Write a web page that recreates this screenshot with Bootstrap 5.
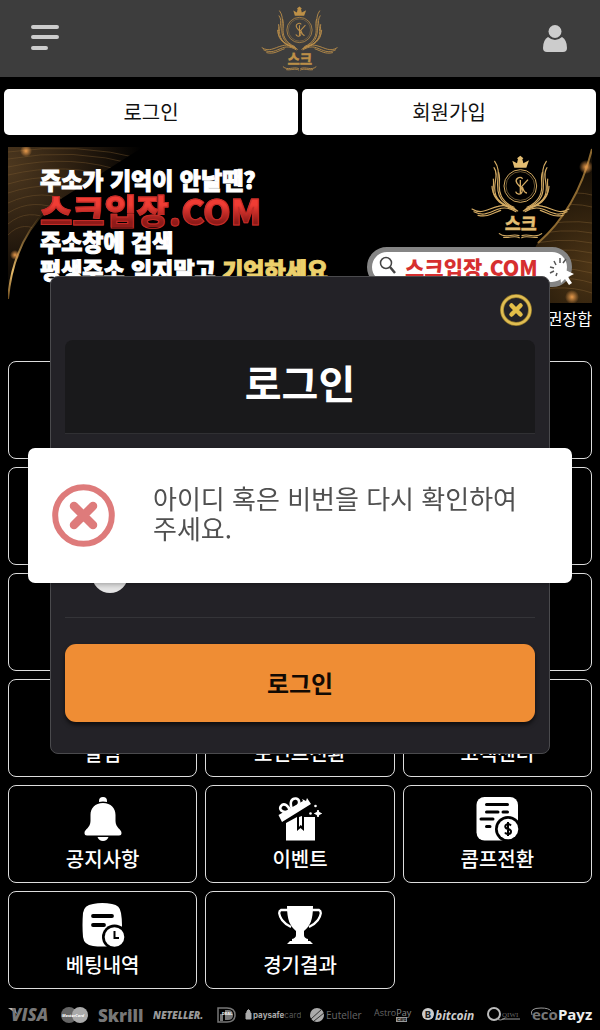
<!DOCTYPE html>
<html lang="ko" data-bs-theme="dark">
<head>
<meta charset="utf-8">
<meta name="viewport" content="width=device-width, initial-scale=1">
<title>로그인</title>
<link href="https://cdn.jsdelivr.net/npm/bootstrap@5.3.0/dist/css/bootstrap.min.css" rel="stylesheet">
<style>
body{background:#000;color:#fff;font-family:"Noto Sans CJK KR",sans-serif}
.topbar{background:#3d3d3d;height:77px;padding:0 31px}
.topbar button{width:28px;height:28px;line-height:0}
.side{flex:1 1 0}
.auth{padding:12px 4px;gap:4px}
.auth a{background:#fff;color:#111;border-radius:5px;font-size:20px;line-height:46px}
.promo{margin:0 8px;height:156px;overflow:hidden}
.promo-bg{position:absolute;inset:0;width:100%;height:100%}
.slogan{position:relative;padding:18px 0 0 32px;font-weight:900;font-size:23px;line-height:28px;-webkit-text-stroke:1px currentColor;white-space:nowrap}
.slogan .big{font-size:35px;line-height:34px;color:#d5302b;-webkit-text-stroke:1px #c42c27;background:linear-gradient(#f03c34 35%,#8f1a18 85%);-webkit-background-clip:text;background-clip:text;-webkit-text-fill-color:transparent}
.slogan .gold{color:#ecd06c}
.promo-side{position:absolute;right:20px;top:8px}
.pill{background:#fff;border:5px solid #858585;border-radius:20px;width:205px;height:40px;color:#d62f2f;font-weight:900;font-size:21px;line-height:30px;padding-left:7px;gap:8px}
.pointer{position:absolute;right:-8px;bottom:-4px}
.ticker{margin:0 8px;font-size:16px;line-height:30px;height:58px;text-align:right;font-weight:400}
.tiles{display:grid;grid-template-columns:repeat(3,1fr);gap:8px;padding:0 8px}
.tile{height:98px;border:1px solid #ddd;border-radius:8px;padding-top:11px;color:#fff;font-weight:500;font-size:20px;line-height:30px;gap:3px}
.tile svg{width:44px;height:44px;flex:none}
.partners{padding:15px 7px 0 8px}
.partners svg{height:22px;flex:none}
.layer{position:fixed;inset:0}
.login{width:100%;max-width:500px;margin:0 28px;height:478px;background:#232227;border:1px solid #4a4a4d;border-radius:8px;padding:16px 14px 0}
.login .close-x{width:34px;height:34px;line-height:0;margin-right:2px}
.login h1{background:#19191b;border-bottom:1px solid #303033;border-radius:8px 8px 0 0;height:94px;margin:13px 0 0;font-size:40px;line-height:84px;font-weight:700}
.login .fields{height:184px;padding:16px 27px 0;border-bottom:1px solid #343438;gap:8px}
.login .fields input[type=text],.login .fields input[type=password]{height:44px;background:#19191b;border-color:#303033}
.login .fields input[type=checkbox]{width:36px;height:36px;margin:3px 0 0;border-radius:50%;background:#e4e4e4;border:0}
.login .go{margin-top:26px;height:78px;background:#ef8d34;color:#120a04;border:0;border-radius:11px;font-size:24px;line-height:32px;font-weight:700;box-shadow:0 3px 4px #0009}
.notice{width:100%;max-width:544px;margin:0 28px;min-height:135px;background:#fff;border-radius:7px;padding:0 24px;gap:38px;color:#505050;font-size:26px;line-height:30px;box-shadow:0 2px 5px #0004}
.notice svg{flex:none}
.notice div{padding-bottom:4px}
</style>
</head>
<body>
<svg class="d-none">
<defs>
<linearGradient id="gold" x1="0" y1="0" x2="1" y2="1"><stop offset="0" stop-color="#f0d48a"/><stop offset=".5" stop-color="#c09045"/><stop offset="1" stop-color="#ecc878"/></linearGradient>
</defs>
<symbol id="wing" viewBox="0 0 306 252" overflow="visible">
<g fill="none" stroke-width="3.5" stroke-linecap="round">
<path d="M74 19C98 52 72 82 88 122C96 142 114 151 134 161"/>
<path d="M72 38C90 62 64 90 78 122C88 145 112 154 136 163"/>
<path d="M86 52C94 76 80 96 94 124C102 140 116 150 132 157"/>
<path d="M70 72C74 100 58 112 88 141C100 151 122 160 138 165"/>
<path d="M66 94C66 120 90 146 118 157"/>
<path d="M6 162C34 180 52 162 84 154C108 147 126 156 143 168"/>
<path d="M12 170C42 186 58 172 86 162C106 155 122 160 138 170"/>
<path d="M24 181C54 188 68 174 92 166"/>
<path d="M88 236C106 252 126 234 147 242"/>
<path d="M101 247C120 250 132 240 148 248"/>
</g>
</symbol>
<symbol id="emblem" viewBox="0 0 306 252">
<use href="#wing" width="306" height="252"/>
<g transform="matrix(-1 0 0 1 303 0)"><use href="#wing" width="306" height="252"/></g>
<path d="M133 38L127 17L141 25L144 12L141 10L151 2L160 10L157 13L160 25L177 16L169 38Z" fill="currentColor" stroke="none"/>
<circle cx="151" cy="93" r="49" fill="none" stroke-width="3"/>
<circle cx="151" cy="93" r="43" fill="none" stroke-width="1.5"/>
<path d="M158 71C149 62 134 72 140 83C146 94 160 99 156 111C152 122 139 117 137 110M151 75V117M152 98L174 74M157 96C160 106 164 114 171 114" fill="none" stroke-width="4"/>
<text x="152" y="225" text-anchor="middle" font-size="52" font-weight="900" fill="currentColor" stroke-width="1">스크</text>
</symbol>
</svg>

<header class="topbar d-flex align-items-center">
<div class="side"><button class="btn p-0 border-0" aria-label="메뉴"><svg width="28" height="28" stroke="#ccc" stroke-width="4" stroke-linecap="round"><path d="M2 2H26M2 12H26M2 23H15"/></svg></button></div>
<a href="#" aria-label="스크"><svg width="80" height="65" color="#bd9047" stroke="#b98d49"><use href="#emblem" width="80" height="65"/></svg></a>
<div class="side text-end"><button class="btn p-0 border-0" aria-label="내 정보"><svg width="28" height="28" viewBox="0 0 28 28" fill="#ccc"><circle cx="14" cy="6.500" r="6.500"/><path d="M7 12Q14 18 21 12Q26 15 26 23Q26 27 22 27H6Q2 27 2 23Q2 15 7 12Z"/></svg></button></div>
</header>

<nav class="auth d-flex text-center">
<a class="flex-fill w-50 text-decoration-none" href="#">로그인</a>
<a class="flex-fill w-50 text-decoration-none" href="#">회원가입</a>
</nav>

<section class="promo position-relative">
<svg class="promo-bg" viewBox="0 0 584 156" preserveAspectRatio="none">
<defs>
<radialGradient id="gl" gradientUnits="userSpaceOnUse" cx="0" cy="20" r="135"><stop offset="0" stop-color="#4d381f"/><stop offset=".5" stop-color="#2b1e10"/><stop offset="1" stop-color="#000"/></radialGradient>
<radialGradient id="gr" gradientUnits="userSpaceOnUse" cx="584" cy="120" r="120"><stop offset="0" stop-color="#4d3516"/><stop offset="1" stop-color="#0c0803"/></radialGradient>
<radialGradient id="spot"><stop offset="0" stop-color="#e79a4c"/><stop offset="1" stop-color="#e79a4c" stop-opacity="0"/></radialGradient>
<linearGradient id="edge" x1="0" y1="0" x2="0" y2="1"><stop offset="0" stop-color="#7d5a25" stop-opacity=".2"/><stop offset=".7" stop-color="#e8bc6a"/><stop offset="1" stop-color="#6b4a1c"/></linearGradient>
<clipPath id="cl"><path d="M0 0H135Q80 35 40 60Q10 90 0 150Z"/></clipPath>
<clipPath id="cr"><path d="M584 0V156H500Q515 125 530 95Q570 60 584 0Z"/></clipPath>
</defs>
<g clip-path="url(#cl)"><rect width="140" height="156" fill="url(#gl)"/>
<path d="M0 5Q70-5 135 12M0 12Q65 0 130 18M0 20Q65 6 120 26M0 28Q60 14 110 32M0 37Q50 22 95 40M0 46Q45 31 80 48M0 56Q35 40 65 56M0 66Q25 50 55 64M0 77Q20 60 45 74M0 88Q15 72 35 86" fill="none" stroke="#75572f" stroke-opacity=".45"/></g>
<path d="M0 152Q5 95 40 62" fill="none" stroke="url(#edge)" stroke-width="2"/>
<g clip-path="url(#cr)"><rect x="484" width="100" height="156" fill="url(#gr)"/>
<path d="M520 80Q560 72 584 76M515 90Q555 80 584 86M510 100Q550 89 584 96M505 110Q550 98 584 106M505 120Q550 107 584 116M505 130Q550 116 584 126M505 140Q550 125 584 136M505 150Q550 134 584 146M545 60Q565 55 584 60M550 48Q570 44 584 48" fill="none" stroke="#806034" stroke-opacity=".45"/></g>
<path d="M584 2Q569 62 530 96" fill="none" stroke="#8d6930" stroke-width="2"/>
<circle cx="578" cy="20" r="7" fill="url(#spot)"/><circle cx="18" cy="4" r="6" fill="url(#spot)"/><circle cx="7" cy="108" r="5" fill="url(#spot)"/><circle cx="564" cy="150" r="7" fill="url(#spot)"/>
</svg>
<div class="slogan">
<div>주소가 기억이 안날땐?</div>
<div class="big">스크입장.COM</div>
<div>주소창에 검색</div>
<div>평생주소 잊지말고 <span class="gold">기억하세요</span></div>
</div>
<div class="promo-side d-flex flex-column align-items-end">
<svg width="102" height="84" color="#e3bd72" stroke="#d3aa62"><use href="#emblem" width="102" height="84"/></svg>
<div class="pill d-flex position-relative mt-2"><svg width="18" height="20" viewBox="0 0 18 20" fill="none" stroke="#444" class="mt-1"><circle cx="7" cy="7" r="5.5" stroke-width="1.5"/><path d="M11 11L16 17" stroke-width="2.5"/></svg><span>스크입장.COM</span>
<svg class="pointer" width="28" height="32" viewBox="0 0 28 32"><path d="M3 13L7 14M3 19L7 17M7 7L9 11M13 4V9M19 5L16 9M9 22L10 19" stroke="#555" stroke-width="1.5"/><path d="M12 13L27 20L21 23L25 29L22 31L18 25L14 29Z" fill="#fff"/></svg></div>
</div>
</section>
<div class="ticker">권장합</div>

<main class="tiles text-center">
<a class="tile" href="#" aria-label="메뉴 1"></a><a class="tile" href="#" aria-label="메뉴 2"></a><a class="tile" href="#" aria-label="메뉴 3"></a>
<a class="tile" href="#" aria-label="메뉴 4"></a><a class="tile" href="#" aria-label="메뉴 5"></a><a class="tile" href="#" aria-label="메뉴 6"></a>
<a class="tile" href="#" aria-label="메뉴 7"></a><a class="tile" href="#" aria-label="메뉴 8"></a><a class="tile" href="#" aria-label="메뉴 9"></a>
<a class="tile d-flex flex-column align-items-center text-decoration-none" href="#"><svg></svg>알림</a>
<a class="tile d-flex flex-column align-items-center text-decoration-none" href="#"><svg></svg>포인트전환</a>
<a class="tile d-flex flex-column align-items-center text-decoration-none" href="#"><svg></svg>고객센터</a>
<a class="tile d-flex flex-column align-items-center text-decoration-none" href="#"><svg viewBox="0 0 44 44" fill="#fff"><path d="M18 5V4Q18 0 22 0Q26 0 26 4V5Q22 4 18 5Z"/><path d="M22 6C14 6 9.500 11 9.500 18V24C9.500 31 3.500 32 3.500 36Q3.500 38.500 6 38.500H38Q40.500 38.500 40.500 36C40.500 32 34.500 31 34.500 24V18C34.500 11 30 6 22 6Z"/><path d="M16.500 40H27.500Q26 44 22 44Q18 44 16.500 40Z"/></svg>공지사항</a>
<a class="tile d-flex flex-column align-items-center text-decoration-none" href="#"><svg viewBox="0 0 44 44"><g fill="none" stroke="#fff" stroke-width="2.600"><path d="M11 15C3 16 1 12 3 9C6 5 11 9 12 14"/><path d="M14 12C11 5 14 1 18 1.500C22 2 22 7 19 10"/></g><path d="M.5 18L25 4L24 2L28 4L29 1L33 7L4 25Z" fill="#fff"/><path d="M8 26L19 20V34L22.500 31L26 34V20H37V43.500H8Z" fill="#fff"/><path d="M21 20L24 19V29L22.500 28L21 30Z" fill="#fff"/><path d="M40 13L41 15.500L43.500 16.500L41 17.500L40 20L39 17.500L36.500 16.500L39 15.500Z" fill="#fff" stroke="#fff"/><circle cx="32.500" cy="16.500" r="1.300" fill="#fff"/><circle cx="37.500" cy="9" r="1.300" fill="#fff"/></svg>이벤트</a>
<a class="tile d-flex flex-column align-items-center text-decoration-none" href="#"><svg viewBox="0 0 44 44"><rect x="1.500" width="41.500" height="43.500" rx="8" fill="#fff"/><path d="M11.500 7.500H32.500M11.500 15H23M28 15H32.500M6 22H18M11.500 29.500H15" stroke="#000" stroke-width="3" stroke-linecap="round"/><circle cx="33" cy="32" r="13" fill="#000"/><circle cx="33" cy="32" r="10.300" fill="#fff"/><path d="M36 28.500C33 25.500 29.500 28 30.500 30.500C31.500 32.500 36 31.500 36 34.500C36 37.500 31.500 38 30 35.500M33 25V39" fill="none" stroke="#000" stroke-width="2"/></svg>콤프전환</a>
<a class="tile d-flex flex-column align-items-center text-decoration-none" href="#"><svg viewBox="0 0 44 44"><path d="M12 1Q21-1 31 1Q39 2 40 10Q42 22 40 34Q38 42 31 43Q21 44 12 43Q3 42 2 34Q1 22 2 10Q3 2 12 1Z" fill="#fff"/><path d="M12 13H31M12 22H23" stroke="#000" stroke-width="3.800" stroke-linecap="round"/><circle cx="33.500" cy="34" r="12.500" fill="#000"/><circle cx="33.500" cy="34" r="9.800" fill="#fff"/><path d="M33.500 28V35H38" fill="none" stroke="#000" stroke-width="2"/></svg>베팅내역</a>
<a class="tile d-flex flex-column align-items-center text-decoration-none" href="#"><svg viewBox="0 0 44 44"><path d="M9 3H35C35 17 32 23 26 28V32Q26 35 30 36V38H32L35 41H9L12 38H14V36Q18 35 18 32V28C12 23 9 17 9 3Z" fill="#fff"/><path d="M11 7H3Q-1 9 4 17Q8 22 13 24M33 7H41Q45 9 40 17Q36 22 31 24" fill="none" stroke="#fff" stroke-width="2.300"/></svg>경기결과</a>
</main>

<footer class="partners d-flex justify-content-between">
<svg width="44" viewBox="0 0 44 22" fill="#777"><path d="M0 4H7L9 10Z" fill="#bbb"/><text x="3" y="17" font-family="Open Sans" font-size="17" font-weight="800" font-style="italic">VISA</text></svg>
<svg width="27" viewBox="0 0 27 22"><circle cx="8" cy="11" r="8" fill="#666"/><circle cx="19" cy="11" r="8" fill="#aaa"/><text x="1" y="13" font-family="Open Sans" font-size="4" font-weight="700" font-style="italic" fill="#fff">MasterCard</text></svg>
<svg width="46" viewBox="0 0 46 22"><text x="0" y="18" font-family="Open Sans" font-size="17" font-weight="800" fill="#777">Skrill</text></svg>
<svg width="54" viewBox="0 0 54 22"><text x="0" y="15" font-family="Open Sans" font-size="10" font-weight="800" font-style="italic" fill="#999">NETELLER.</text></svg>
<svg width="19" viewBox="0 0 19 22"><path d="M1 4H10Q18 4 18 11Q18 18 10 18H1Z" fill="none" stroke="#777" stroke-width="1.500"/><path d="M3 10H6V17H3ZM8 6H11Q16 6 16 11Q16 16 11 16H8Z" fill="#777"/><text x="5" y="11" font-size="4" font-family="Inter" font-weight="700" fill="#fff">DEAL</text></svg>
<svg width="56" viewBox="0 0 56 22"><path d="M1 9H6V15H1ZM2 9V7Q3.500 4 5 7V9" fill="#aaa" stroke="#aaa"/><text x="8" y="14" font-family="Inter" font-size="8" font-weight="700" fill="#aaa">paysafe<tspan font-weight="400" fill="#555">card</tspan></text></svg>
<svg width="54" viewBox="0 0 54 22"><circle cx="7" cy="11" r="7" fill="#aaa"/><path d="M1 15L12 5M4 17L14 9" stroke="#333"/><text x="16" y="15" font-family="Open Sans" font-size="10" fill="#666">Euteller</text></svg>
<svg width="39" viewBox="0 0 39 22"><text x="0" y="12" font-family="Open Sans" font-size="9" fill="#666">Astro<tspan fill="#888">Pay</tspan></text><rect x="22" y="13" width="11" height="5" fill="#999"/><text x="23" y="17" font-size="4" font-family="Inter" font-weight="700" fill="#000">Card</text></svg>
<svg width="55" viewBox="0 0 55 22"><circle cx="6" cy="10" r="6" fill="#ccc"/><text x="3" y="14" font-size="9" font-family="Inter" font-weight="800" fill="#222">B</text><text x="13" y="16" font-family="Open Sans" font-size="12" font-weight="700" font-style="italic" fill="#ccc">bitcoin</text></svg>
<svg width="34" viewBox="0 0 34 22"><circle cx="7" cy="10" r="6" fill="none" stroke="#bbb" stroke-width="2"/><path d="M9 14Q13 18 18 14M15 15H33" fill="none" stroke="#999"/><text x="15" y="13" font-family="Liberation Serif" font-size="7" fill="#666">QIWI</text></svg>
<svg width="63" viewBox="0 0 63 22"><path d="M2 11Q-1 4 11 4Q19 4 21 7" fill="none" stroke="#999"/><text x="2" y="16" font-family="Open Sans" font-size="15" font-weight="700" fill="#777">eco<tspan fill="#eee">Payz</tspan></text></svg>
</footer>

<div class="layer d-flex align-items-center justify-content-center">
<form class="login text-center d-flex flex-column">
<button type="button" class="close-x btn p-0 border-0 align-self-end" aria-label="닫기"><svg width="34" height="34" viewBox="0 0 34 34" fill="none"><circle cx="17" cy="17" r="14" stroke="#8d742b" stroke-width="4"/><circle cx="17" cy="17" r="14" stroke="#e0bd52" stroke-width="2.500"/><path d="M12.500 12.500L21.500 21.500M21.500 12.500L12.500 21.500" stroke="#e2bd48" stroke-width="4.500" stroke-linecap="round"/></svg></button>
<h1>로그인</h1>
<div class="fields d-flex flex-column align-items-start"><input class="form-control" type="text" aria-label="아이디"><input class="form-control" type="password" aria-label="비밀번호"><input class="form-check-input" type="checkbox" aria-label="저장"></div>
<button type="button" class="go btn w-100">로그인</button>
</form>
</div>
<div class="layer d-flex align-items-center justify-content-center">
<div class="notice d-flex align-items-center" role="alert">
<svg width="63" height="63" viewBox="0 0 63 63" fill="none" stroke="#de7b7b"><circle cx="31.500" cy="31.500" r="28.300" stroke-width="6"/><path d="M22 22L41 41M41 22L22 41" stroke-width="8.500" stroke-linecap="round"/></svg>
<div>아이디 혹은 비번을 다시 확인하여 주세요.</div>
</div>
</div>
<script src="https://cdn.jsdelivr.net/npm/bootstrap@5.3.0/dist/js/bootstrap.bundle.min.js"></script>
</body>
</html>
